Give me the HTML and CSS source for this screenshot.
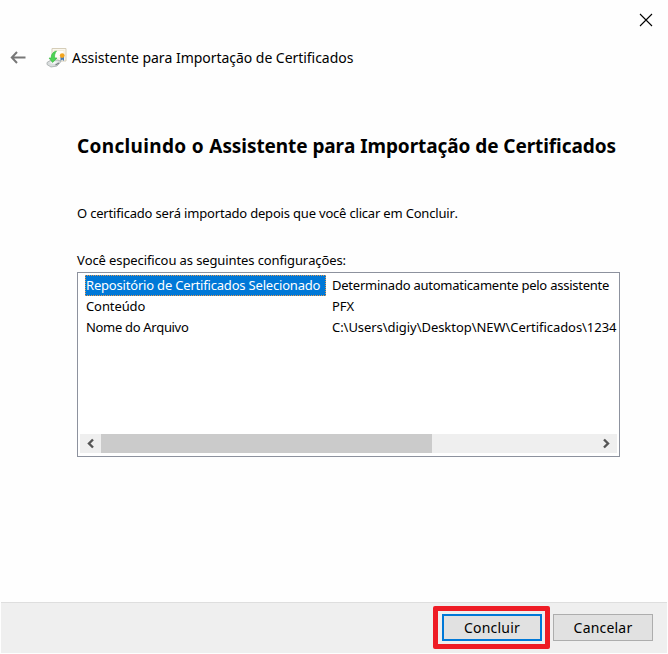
FILE: index.html
```html
<!DOCTYPE html>
<html lang="pt-BR">
<head>
<meta charset="utf-8">
<title>Assistente para Importação de Certificados</title>
<link rel="stylesheet" href="styles.css">
</head>
<body>
<div class="wizard">
  <div class="caption">
    <svg class="close" width="14" height="14" viewBox="0 0 14 14"><path d="M1 1L13 13M13 1L1 13" fill="none" stroke="#000" stroke-width="1.1"/></svg>
  </div>
  <header class="title-row">
    <svg class="back" width="16" height="14" viewBox="0 0 16 14"><path d="M15.5 6.5H2M7 1L1.8 6.5L7 12" fill="none" stroke="#777" stroke-width="2"/></svg>
    <svg class="cert" width="22" height="22" viewBox="0 0 22 22">
      <path d="M6 1.5H20V14H6Z" fill="#fbf8ee" stroke="#d5cdb8"/>
      <path d="M8 3.5H18V11H8Z" fill="#fffefa" stroke="#ece6d6" stroke-width=".7"/>
      <path d="M1 15.5L5 13H12L15 14.5L11 19L5 20L1 17.5Z" fill="#d9dddd" stroke="#a3a9a9" stroke-width=".8"/>
      <path d="M3 16L7 14.5H12L8.5 17Z" fill="#f4f6f6"/>
      <path d="M9.5 18L13 16" stroke="#777f80" stroke-width="1.2"/>
      <path d="M10.5 4C6.5 5 5 8 5.3 11H3L6.6 15.5L11 11H8.7C8.2 8.3 9 6 10.5 4Z" fill="#4ed454" stroke="#34b63d" stroke-width=".6"/>
      <path d="M14.5 9.5V14L16.2 12.5L18 14V9.5Z" fill="#4779b4"/>
      <circle cx="16.2" cy="8.6" r="2.4" fill="#f3a51e"/>
    </svg>
    <span class="window-title">Assistente para Importação de Certificados</span>
  </header>
  <main class="content">
    <h1><span class="lead">Concluindo o </span>Assistente para Importação de Certificados</h1>
    <p class="intro">O certificado será importado depois que você clicar em Concluir.</p>
    <p class="label">Você especificou as seguintes configurações:</p>
    <div class="list">
      <div class="rows">
        <div class="row"><span class="name selected">Repositório de Certificados Selecionado</span><span class="value automatic">Determinado automaticamente pelo assistente</span></div>
        <div class="row"><span class="name">Conteúdo</span><span class="value">PFX</span></div>
        <div class="row"><span class="name file">Nome do Arquivo</span><span class="value path">C:\Users\digiy\Desktop\NEW\Certificados\1234</span></div>
      </div>
      <div class="scrollbar">
        <svg width="21" height="19" viewBox="0 0 21 19"><path d="M13 5.5L9 9.5L13 13.5" fill="none" stroke="#555" stroke-width="2.4"/></svg>
        <div class="thumb"></div>
        <svg class="right" width="21" height="19" viewBox="0 0 21 19"><path d="M8 5.5L12 9.5L8 13.5" fill="none" stroke="#555" stroke-width="2.4"/></svg>
      </div>
    </div>
  </main>
  <footer class="actions">
    <div class="highlight"><button class="primary" type="button">Concluir</button></div>
    <button class="cancel" type="button">Cancelar</button>
  </footer>
</div>
</body>
</html>
```
FILE: styles.css
```css
* { box-sizing: border-box; }
body { margin: 0; background: #fefefe; color: #000; font: 13px/20px "Noto Sans", "Open Sans", sans-serif; font-kerning: none; font-variant-ligatures: none; }
h1, p { margin: 0; white-space: nowrap; }
svg { display: block; flex: none; }
.wizard { width: 668px; height: 654px; display: flex; flex-direction: column; overflow: hidden; padding: 0 1px 1px; }
.caption { height: 41px; display: flex; justify-content: flex-end; padding: 13px 14px 0 0; }
.title-row { height: 33px; display: flex; align-items: center; padding-left: 9px; }
.cert { margin-left: 20px; }
.window-title { margin-left: 4px; font-size: 14px; white-space: nowrap; letter-spacing: -.04px; }
.content { flex: 1; padding: 58px 47px 0 76px; }
h1 { font-size: 19px; line-height: 28px; font-weight: 700; letter-spacing: -.08px; }
.lead { letter-spacing: .34px; }
.intro { margin-top: 43px; letter-spacing: -.19px; }
.label { margin-top: 27px; letter-spacing: -.11px; }
.list { width: 543px; height: 185px; margin-top: 2px; border: 1px solid #8d929e; background: #fff; display: flex; flex-direction: column; justify-content: space-between; padding: 2px 2px 3px; }
.row { height: 21px; display: flex; align-items: center; white-space: nowrap; padding-left: 5px; }
.name { flex: none; width: 241px; height: 21px; border: 1px solid transparent; line-height: 19px; letter-spacing: -.1px; }
.selected { background: #0078d7; color: #fff; border: 1px dotted #e59b52; letter-spacing: -.19px; }
.file { letter-spacing: -.33px; }
.value { margin-left: 6px; line-height: 19px; }
.automatic { letter-spacing: -.24px; }
.path { letter-spacing: -.05px; }
.scrollbar { height: 19px; display: flex; background: #efefef; }
.thumb { width: 331px; background: #cbcbcb; }
.right { margin-left: auto; }
.actions { height: 51px; border-top: 1px solid #dedede; background: #efefef; display: flex; align-items: flex-start; padding: 3px 14px 0 0; justify-content: flex-end; }
.highlight { width: 117px; height: 43px; border: 5px solid #ee1c25; border-radius: 2px; padding: 3px 4px; }
button { display: block; width: 100px; height: 27px; padding: 0; background: #e1e1e1; font: 14px/20px "Noto Sans", "Open Sans", sans-serif; color: #000; border: 1px solid #adadad; border-radius: 0; }
.highlight .primary { border: 2px solid #0078d7; letter-spacing: .2px; }
.cancel { margin: 8px 0 0 3px; letter-spacing: .2px; }
```
